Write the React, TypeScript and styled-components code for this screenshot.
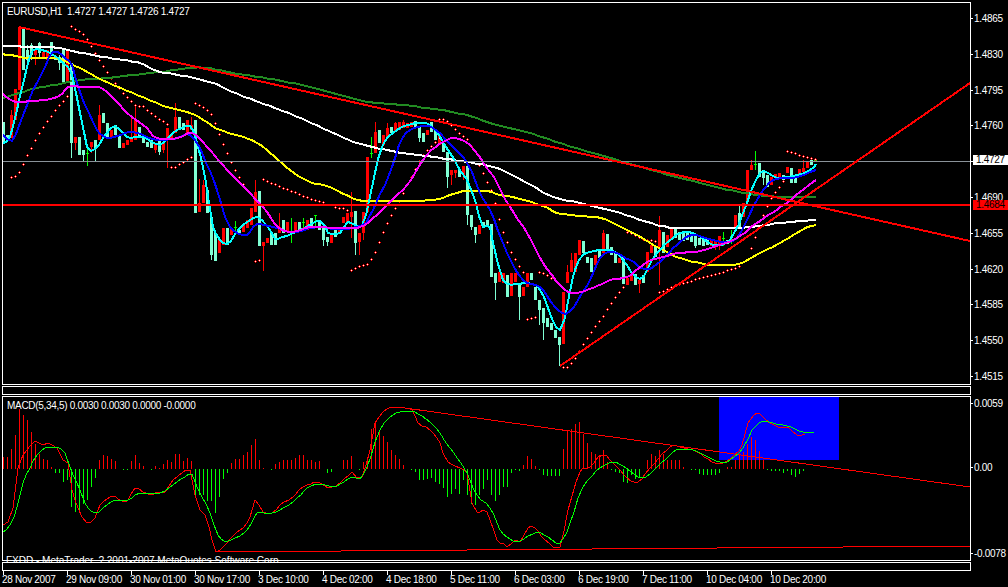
import React from "react";
import styled, { createGlobalStyle } from "styled-components";

const GlobalStyle = createGlobalStyle`
  html, body { margin: 0; padding: 0; background: #000; }
  #root { width: 1008px; height: 587px; overflow: hidden; }
`;

type Pt = [number, number];

const pairs = (s: string): Pt[] => {
  const n = s.trim().split(/[\s,]+/).map(Number);
  const out: Pt[] = [];
  for (let i = 0; i + 1 < n.length; i += 2) out.push([n[i], n[i + 1]]);
  return out;
};

const smooth = (p: Pt[]): string => {
  const out: string[] = [];
  for (let i = 0; i < p.length - 1; i++) {
    const a = p[Math.max(0, i - 1)], b = p[i], c = p[i + 1], d = p[Math.min(p.length - 1, i + 2)];
    const steps = Math.max(1, Math.round((c[0] - b[0]) / 4));
    for (let k = 0; k < steps; k++) {
      const t = k / steps, t2 = t * t, t3 = t2 * t;
      const f = (j: 0 | 1) =>
        0.5 * (2 * b[j] + (c[j] - a[j]) * t + (2 * a[j] - 5 * b[j] + 4 * c[j] - d[j]) * t2 + (3 * b[j] - a[j] - 3 * c[j] + d[j]) * t3);
      out.push(`${Math.round(f(0))},${Math.round(f(1))}`);
    }
  }
  const l = p[p.length - 1];
  out.push(`${l[0]},${l[1]}`);
  return out.join(" ");
};

/* colour top bottom [high low] — one candle every 4 px from x = 3 */
const CANDLES = `a 122 143,a 135 140,r 115 138 110 138,r 89 120,r 27 90,a 28 70,a 50 60 45 62,a 45 55 43 60,r 50 55 46 65,a 43 53 42 58,r 52 57,r 50 60 50 64,a 42 53 42 56,a 57 60,a 57 63 55 70,a 50 83,r 50 83,a 63 143 63 158,r 137 143 137 150,a 137 155,a 150 155 150 162,g 153 154 148 166,r 142 147 142 153,a 140 148 140 161,r 115 140 105 140,a 113 123,a 123 137,r 130 137,a 125 135,a 135 148,r 143 148,r 140 145,r 138 142 117 142,r 120 140 106 140,a 127 138,a 137 143,a 142 147,a 140 148,r 143 150 143 153,a 140 152 140 155,r 143 150 143 153,r 128 140 128 168,r 135 140,r 117 133 103 133,a 117 130,a 123 130,r 120 133,r 125 130 117 130,a 120 213,r 203 212 179 212,r 185 203 180 203,a 190 213,a 217 255 217 260,a 233 261,r 240 253,r 228 245,a 228 245,r 228 235,g 227 228 221 233,a 230 235,r 225 232,r 220 228,r 208 225,r 192 212 180 212,a 191 246,r 242 246 242 271,r 238 243,a 233 245,a 233 245,r 227 233 213 233,a 220 233,r 222 232,g 232 233 218 243,r 222 232,a 222 230,g 222 223 218 228,r 220 230,a 218 227,g 215 216 215 227,a 220 230,a 227 240 227 246,a 237 242 237 246,r 235 243,a 230 237,r 227 233,r 217 223,r 213 222,r 212 217 192 238,a 211 243 211 255,r 233 242 233 255,r 212 233 212 240,r 157 212,g 153 154 137 158,r 132 153 122 153,a 130 143,r 135 145,r 128 137 123 137,a 127 133,r 123 132 122 132,r 122 130,r 122 128 120 128,r 123 128,r 122 127,a 121 127,a 127 138 127 142,a 133 142,r 130 135,a 122 132,a 130 140,r 132 145,a 143 152,a 152 177 152 188,r 170 175 170 185,r 170 173 170 178,a 170 177,r 166 175 166 180,a 166 215 166 225,a 215 227 215 230,a 227 235 227 243,r 225 234,a 222 227,a 220 226,a 224 277,a 273 283 273 300,r 272 282,r 273 283,a 275 297,r 273 296,r 273 282,a 283 297 283 320,r 287 296,r 273 287,a 273 280,a 287 300,a 300 310 300 325,a 308 323 308 340,a 318 327,a 323 330,a 330 338,a 337 345 337 366,r 292 344,r 272 283 265 283,r 260 272 253 272,r 253 272,r 240 255,a 241 253,a 257 263,a 258 272,r 255 265,a 250 258,r 233 253 230 253,a 234 250,a 247 255,a 253 263,r 258 263,a 257 284,r 278 285,r 275 281,a 274 285,r 280 284 280 293,a 275 283,r 252 272,r 245 253,a 247 257,r 230 247 216 285,a 232 253,r 235 247,r 228 240,a 228 238,a 232 240,a 233 241,a 233 240,a 233 242,a 235 246 235 248,a 238 245,a 237 246,a 239 245,r 240 246,r 240 247 240 250,r 236 246 236 250,g 238 239 232 246,a 240 244,g 236 237 230 244,r 215 228,a 213 227 206 227,r 203 217,r 170 202,r 165 170 160 170,g 164 165 151 170,a 163 177,a 170 178 170 185,a 175 187,r 177 185,r 174 178,r 173 177,a 175 180,r 167 173,a 168 183,a 177 183,r 169 175,r 168 172 160 172,r 162 168,a 160 165,g 160 161 158 162`
  .split(",")
  .map((row, i) => {
    const [c, t, b, h, l] = row.split(" ");
    return { x: 3 + 4 * i, c, t: +t, b: +b, h: h ? +h : +t, l: l ? +l : +b };
  });

const CANDLE_COLOURS: Record<string, string> = { a: "#7fffd4", r: "#ff0000", g: "#00ff00" };

const DOTS = pairs(`11 177 15 176 19 172 23 164 27 155 31 148 35 140 39 133 43 127 47 121 51 116 55 110 59 105 63 101 67 96
71 26 75 29 79 31 83 34 87 39 91 46 95 53 99 60 103 66 107 72 111 78 115 83 119 88 123 93 127 97 131 101 135 105 139 106 143 106 147 110 151 113 155 116 159 119 163 121 167 124
171 167 175 167 179 164 183 162 187 159 191 157
195 103 199 105 203 107 207 110 211 114 215 123 219 134 223 144 227 153 231 162 235 170 239 177 243 184
255 261 259 260
263 179 267 181 271 183 275 184 279 186 283 188 287 189 291 191 295 192 299 194 303 196 307 197 311 199 315 200 319 201 323 202 335 207 339 208 343 208 347 210
351 270 355 268 359 266 363 265 367 264 371 259 375 252 379 242 383 232 387 223 391 215 395 208 399 201 403 193 407 184 411 177 415 169 419 161 423 155 427 150 431 146 435 142 439 138
439 119 443 119 447 121 451 125 455 129 459 133 463 136 467 139 471 146 479 165 483 173 487 182 491 190 495 203 499 219 503 232 507 242 511 252 515 259 519 266 523 272
527 319 531 318 535 317
539 272 543 273 547 275 551 278
563 367 567 367 571 363 575 358 579 351 583 344 587 338 591 332 595 326 599 321 603 316 607 309 611 303 615 297 619 292 623 287
627 232 631 233 635 235 639 237 643 239 647 240 651 240 655 241
659 292 663 291 667 289 671 287 675 285 679 284 683 283 687 282 691 281 695 279 699 278 703 277 707 276 711 275 715 274 719 273 723 272 727 270 731 269 735 268 739 266
751 248 755 237 759 227 763 215 767 206 771 198 775 192 779 187 783 181
787 151 791 152 795 153 799 155 803 156 807 157 811 158 815 159`);

const YELLOW = pairs(`3 54 20 57 33 58 55 58 67 62 80 68 100 79 123 89 147 99 167 107 190 113 203 120 220 130 240 136 255 142 267 150 290 170 310 182 327 186 340 192 350 197 363 201 383 201 433 200 453 194 467 191 487 191 500 195 513 197 543 206 557 213 570 215 600 218 617 225 637 235 657 247 680 258 700 263 713 265 738 264 760 253 780 243 793 235 807 227 816 225`);
const WHITE = pairs(`3 46 40 47 60 48 77 52 110 58 140 63 157 71 190 77 213 83 240 95 267 105 293 115 320 127 340 136 357 143 373 147 397 152 440 158 473 163 497 168 527 183 553 197 580 203 617 212 647 222 667 227 680 228 730 228 750 227 780 223 816 220`);
const FOREST = pairs(`3 98 20 93 37 88 60 84 80 80 107 78 133 75 160 72 190 68 207 68 233 73 277 80 310 87 340 95 367 102 403 105 447 111 473 117 490 123 530 133 560 143 593 153 627 163 680 178 720 188 767 196 816 197`);
const MAGENTA = pairs(`3 94 13 101 33 101 57 97 68 87 80 87 103 89 127 113 143 125 157 138 177 138 192 133 207 147 227 170 247 190 263 207 278 227 293 232 310 227 340 228 360 227 373 218 390 202 407 185 427 155 443 142 455 138 470 145 483 162 497 183 510 207 527 233 543 263 560 285 573 293 593 288 610 280 627 277 647 262 670 255 680 253 700 251 713 247 737 238 757 223 787 203 800 192 816 180`);
const BLUE = pairs(`3 135 12 141 20 123 33 90 42 73 53 52 62 55 72 65 77 83 93 122 107 138 133 132 157 140 177 138 190 135 203 155 217 190 230 227 247 235 257 224 277 228 293 232 317 227 340 229 363 225 373 210 392 167 403 137 418 127 433 128 453 147 467 163 480 193 490 210 507 253 523 280 540 287 558 310 570 311 590 280 600 258 613 252 630 260 650 269 680 242 693 235 717 241 737 238 757 200 773 180 797 177 816 170`);
const CYAN = pairs(`3 143 10 137 17 110 27 67 33 50 50 53 63 63 72 75 80 113 87 147 95 149 107 133 115 126 127 137 143 137 160 145 173 133 190 126 197 143 205 177 213 227 227 244 240 228 257 217 270 230 275 239 300 230 320 221 328 233 340 233 348 222 362 225 372 187 382 147 397 130 415 123 430 125 443 142 457 165 470 187 483 227 490 227 503 280 527 283 540 290 560 330 573 277 583 255 610 250 623 260 640 279 657 253 680 233 697 235 713 245 730 240 743 213 760 173 777 178 797 175 810 170 816 164`);

const MACD_MAIN = pairs(`3 525 8 522 13 508 18 468 23 455 30 446 35 441 43 445 48 443 57 448 63 460 68 463 72 490 78 508 87 523 95 518 100 505 110 497 115 496 122 501 128 500 135 488 143 492 152 495 157 492 165 492 173 480 182 473 190 470 195 495 200 510 205 515 212 540 216 552 220 550 227 543 237 532 243 528 250 517 255 500 263 512 272 513 280 505 293 497 303 487 318 482 328 488 340 483 352 472 357 478 362 477 370 450 375 423 387 409 398 407 412 410 418 423 430 430 440 443 448 462 467 473 472 503 477 512 487 512 497 540 503 543 507 547 515 540 520 542 528 528 535 528 545 540 560 547 568 510 580 472 590 467 603 455 617 467 627 478 638 482 650 468 670 447 680 447 697 452 715 463 730 459 742 445 748 423 757 413 763 417 770 423 782 428 788 427 797 435 805 434`);
const MACD_SIGNAL = pairs(`3 532 10 525 17 507 23 483 30 468 37 455 45 448 57 447 65 453 70 467 77 483 85 503 95 513 107 505 115 500 128 500 140 493 160 493 177 482 192 474 197 487 210 513 218 535 228 541 247 530 257 513 272 513 293 502 307 488 320 484 333 487 340 484 352 477 360 479 367 467 380 430 393 415 403 411 415 412 433 425 443 438 457 458 467 473 477 495 490 508 500 530 510 539 520 541 537 532 548 537 560 543 570 523 583 487 600 468 613 462 623 466 642 478 657 467 672 453 680 449 690 449 700 453 720 462 730 460 743 448 752 430 763 421 773 423 787 426 803 432 814 432`);

const HIST = [12,12,20,34,60,54,49,37,25,15,10,9,2,-4,-4,-13,-11,-38,-43,-43,-35,-31,-18,-9,9,14,13,10,8,0,-1,-1,8,14,6,3,0,-1,3,1,5,9,7,15,15,8,11,8,-26,-26,-26,-32,-32,-44,-28,-10,-4,6,10,10,14,17,24,30,9,1,0,-1,5,7,9,9,9,11,14,14,9,9,7,8,0,-4,-3,0,0,9,9,13,0,-1,7,10,40,47,37,33,27,19,14,10,4,0,-1,-3,-11,-11,-10,-9,-13,-15,-19,-28,-25,-20,-25,-11,-26,-35,-36,-26,-20,-11,-26,-32,-26,-18,-18,-4,-1,-2,4,13,10,3,-1,-6,-7,-7,-7,-7,20,39,40,45,47,35,26,17,15,14,19,7,-1,-3,-4,-13,-14,-6,-10,-8,0,9,15,13,19,15,9,9,9,9,2,0,-1,-1,-5,-6,-6,-6,-6,-4,0,2,2,9,14,17,25,32,29,18,9,-1,-2,-2,-2,-4,-2,-6,-8,-5,-2];

const PRICE_LABELS = ["1.4865", "1.4830", "1.4795", "1.4760", "", "1.4690", "1.4655", "1.4620", "1.4585", "1.4550", "1.4515"];
const TIME_LABELS = ["28 Nov 2007", "29 Nov 09:00", "30 Nov 01:00", "30 Nov 17:00", "3 Dec 10:00", "4 Dec 02:00", "4 Dec 18:00", "5 Dec 11:00", "6 Dec 03:00", "6 Dec 19:00", "7 Dec 11:00", "10 Dec 04:00", "10 Dec 20:00"];

const Page = styled.div`
  width: 1008px;
  height: 587px;
  box-sizing: border-box;
  padding: 2px 0 0 2px;
  background: #000;
  color: #fff;
  display: flex;
  flex-direction: column;
  gap: 1px;
  font-family: "Liberation Sans", Arial, sans-serif;
  font-size: 10px;
  letter-spacing: -0.3px;
  line-height: 12px;
  overflow: hidden;
`;

const Row = styled.div<{ $h: number }>`
  display: flex;
  flex: none;
  height: ${(p) => p.$h}px;
`;

const Pane = styled.div`
  position: relative;
  flex: none;
  width: 969px;
  box-sizing: border-box;
  border: 1px solid #fff;
  background: #000;
`;

const ChartSvg = styled.svg`
  display: block;
  overflow: hidden;
  shape-rendering: crispEdges;
`;

const Caption = styled.div`
  position: absolute;
  left: 4px;
  top: 3px;
  white-space: pre;
`;

const Copyright = styled.div`
  position: absolute;
  left: 3px;
  bottom: -7px;
  white-space: pre;
  letter-spacing: 0;
`;

const PriceAxis = styled.div`
  position: relative;
  flex: 1;
  display: flex;
  flex-direction: column;
  justify-content: space-between;
  padding: 11px 0 0 0;
  height: 370px;
`;

const MacdAxis = styled.div`
  flex: 1;
  display: grid;
  grid-template-rows: 64px 86px 12px;
  padding-top: 2px;
`;

const AxisLabel = styled.div`
  position: relative;
  height: 12px;
  padding-left: 3px;
  white-space: nowrap;
  &::before {
    content: "";
    position: absolute;
    left: 0;
    top: 5px;
    width: 2px;
    height: 1px;
    background: #fff;
  }
`;

const PriceTag = styled.div<{ $red?: boolean; $top: number }>`
  position: absolute;
  left: 2px;
  top: ${(p) => p.$top}px;
  width: 35px;
  height: 10px;
  line-height: 10px;
  padding-left: 3px;
  box-sizing: border-box;
  color: #000;
  background: ${(p) => (p.$red ? "#ff0000" : "#fff")};
`;

const TimeAxis = styled.div`
  display: flex;
  flex: none;
  width: 969px;
  margin-top: -1px;
`;

const TimeLabel = styled.div`
  flex: none;
  width: 64px;
  box-sizing: border-box;
  padding-top: 3px;
  position: relative;
  white-space: nowrap;
  &::before {
    content: "";
    position: absolute;
    left: 1px;
    top: 0;
    width: 1px;
    height: 4px;
    background: #fff;
  }
`;

const Line = ({ pts, color, w = 2 }: { pts: Pt[]; color: string; w?: number }) => (
  <polyline points={smooth(pts)} fill="none" stroke={color} strokeWidth={w} />
);

const Candles = () => (
  <g>
    {CANDLES.map((k) => (
      <g key={k.x} fill={CANDLE_COLOURS[k.c]}>
        <rect x={k.x} y={k.h} width={1} height={k.l - k.h} />
        <rect x={k.x - 1} y={k.t} width={3} height={k.b - k.t} />
      </g>
    ))}
  </g>
);

const Dots = () => (
  <g fill="none" strokeWidth={1}>
    <path stroke="#ff0000" d={DOTS.map(([x, y]) => `M${x - 1} ${y + 0.5}h3M${x + 0.5} ${y - 1}v3`).join("")} />
    <path stroke="#ffffff" d={DOTS.map(([x, y]) => `M${x} ${y + 0.5}h1`).join("")} />
  </g>
);

const Histogram = () => (
  <g>
    {HIST.map((v, i) =>
      v === 0 ? null : (
        <rect
          key={i}
          x={3 + 4 * i}
          y={v > 0 ? 469 - v : 469}
          width={1}
          height={Math.abs(v)}
          fill={v > 0 ? "#ff0000" : "#00ff00"}
        />
      )
    )}
  </g>
);

const PriceChart = () => (
  <ChartSvg width={967} height={381} viewBox="3 3 967 381">
    <Candles />
    <Dots />
    <Line pts={FOREST} color="#228b22" />
    <Line pts={WHITE} color="#ffffff" />
    <Line pts={YELLOW} color="#ffff00" />
    <Line pts={CYAN} color="#00ffff" />
    <Line pts={BLUE} color="#0000ff" />
    <Line pts={MAGENTA} color="#ff00ff" />
    <rect x={3} y={161} width={967} height={1} fill="#8a9299" />
    <line x1={19} y1={27} x2={970} y2={241} stroke="#ff0000" strokeWidth={2} />
    <line x1={560} y1={366} x2={970} y2={83} stroke="#ff0000" strokeWidth={2} />
    <rect x={3} y={204} width={967} height={2} fill="#ff0000" />
  </ChartSvg>
);

const MacdChart = () => (
  <ChartSvg width={967} height={163} viewBox="3 397 967 163">
    <rect x={719} y={397} width={120} height={63} fill="#0000ff" />
    <Histogram />
    <line x1={398} y1={407} x2={970} y2={487} stroke="#ff0000" strokeWidth={1} />
    <line x1={216} y1={552} x2={970} y2={546} stroke="#ff0000" strokeWidth={1} />
    <Line pts={MACD_MAIN} color="#ff0000" w={1} />
    <Line pts={MACD_SIGNAL} color="#00ff00" w={1} />
  </ChartSvg>
);

export default function App() {
  return (
    <Page>
      <GlobalStyle />
      <Row $h={383}>
        <Pane>
          <PriceChart />
          <Caption>EURUSD,H1  1.4727 1.4727 1.4726 1.4727</Caption>
        </Pane>
        <PriceAxis>
          {PRICE_LABELS.map((p, i) => (
            <AxisLabel key={i}>{p}</AxisLabel>
          ))}
          <PriceTag $top={153}>1.4727</PriceTag>
          <PriceTag $top={198} $red>1.4684</PriceTag>
        </PriceAxis>
      </Row>
      <Row $h={9}>
        <Pane />
      </Row>
      <Row $h={165}>
        <Pane>
          <MacdChart />
          <Caption>MACD(5,34,5) 0.0030 0.0030 0.0000 -0.0000</Caption>
          <Copyright>FXDD - MetaTrader, ? 2001-2007 MetaQuotes Software Corp.</Copyright>
        </Pane>
        <MacdAxis>
          <AxisLabel>0.0059</AxisLabel>
          <AxisLabel>0.00</AxisLabel>
          <AxisLabel>-0.0078</AxisLabel>
        </MacdAxis>
      </Row>
      <Row $h={9}>
        <Pane />
      </Row>
      <TimeAxis>
        {TIME_LABELS.map((t) => (
          <TimeLabel key={t}>{t}</TimeLabel>
        ))}
      </TimeAxis>
    </Page>
  );
}
